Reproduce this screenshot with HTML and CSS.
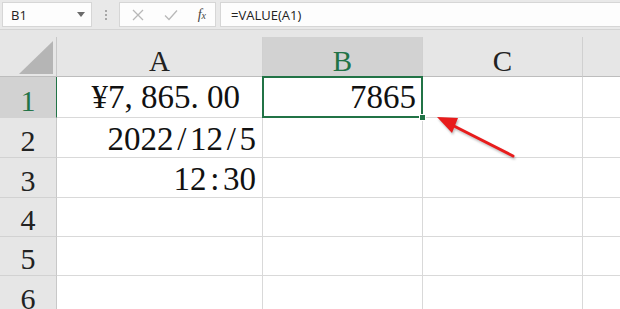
FILE: index.html
```html
<!DOCTYPE html>
<html lang="zh-CN">
<head>
    <meta charset="UTF-8">
    <title>VALUE</title>
    <link rel="stylesheet" href="styles.css">
</head>
<body>
    <div class="toolbar">
        <div class="namebox">
            <span>B1</span>
            <svg class="caret" width="8" height="5" viewBox="0 0 8 5"><path d="M0 0h8L4 5z" fill="#6b6b6b"/></svg>
        </div>
        <div class="grip"><i></i><i></i><i></i></div>
        <div class="fbuttons">
            <svg width="12" height="12" viewBox="0 0 12 12"><path d="M1 1l10 10M11 1L1 11" stroke="#b8b8b8" stroke-width="1.3"/></svg>
            <svg width="14" height="12" viewBox="0 0 14 12"><path d="M1 6.5l4 4L13 1.5" stroke="#b8b8b8" stroke-width="1.3" fill="none"/></svg>
            <span class="fx">f<small>x</small></span>
        </div>
        <div class="formula">=VALUE(A1)</div>
    </div>

    <div class="sheet">
        <div class="corner"><b></b></div>
        <div class="colhead">A</div>
        <div class="colhead sel">B</div>
        <div class="colhead">C</div>
        <div class="colhead last"></div>

        <div class="rowhead sel">1</div>
        <div class="cell money">¥7<span class="pl">,</span>865<span class="pl">.</span>00</div>
        <div class="cell active">7865</div>
        <div class="cell"></div>
        <div class="cell last"></div>

        <div class="rowhead">2</div>
        <div class="cell">2022<span class="pc">/</span>12<span class="pc">/</span>5</div>
        <div class="cell"></div>
        <div class="cell"></div>
        <div class="cell last"></div>

        <div class="rowhead">3</div>
        <div class="cell">12<span class="pc">:</span>30</div>
        <div class="cell"></div>
        <div class="cell"></div>
        <div class="cell last"></div>

        <div class="rowhead">4</div>
        <div class="cell"></div>
        <div class="cell"></div>
        <div class="cell"></div>
        <div class="cell last"></div>

        <div class="rowhead">5</div>
        <div class="cell"></div>
        <div class="cell"></div>
        <div class="cell"></div>
        <div class="cell last"></div>

        <div class="rowhead">6</div>
        <div class="cell"></div>
        <div class="cell"></div>
        <div class="cell"></div>
        <div class="cell last"></div>
    </div>

    <svg class="arrow" width="620" height="309" viewBox="0 0 620 309">
        <line x1="513" y1="156" x2="450" y2="124" stroke="#e81c1c" stroke-width="3" stroke-linecap="round"/>
        <polygon points="437,117 458,118 452,133" fill="#e81c1c"/>
    </svg>
</body>
</html>
```

FILE: styles.css
```css
body {
    margin: 0;
    width: 620px;
    height: 309px;
    overflow: hidden;
    background: #e6e6e6;
    position: relative;
    font-family: "Open Sans", "Noto Sans", sans-serif;
}
.toolbar {
    display: flex;
    align-items: center;
    height: 30px;
    padding: 0 0 0 2px;
    background: #e9e9e9;
    border-bottom: 1px solid #d4d4d4;
    box-sizing: border-box;
}
.namebox {
    width: 90px;
    height: 25px;
    background: #fdfdfd;
    border: 1px solid #d6d6d6;
    box-sizing: border-box;
    display: flex;
    align-items: center;
    justify-content: space-between;
    padding: 0 6px 0 8px;
    font-size: 13px;
    color: #222;
}
.grip {
    width: 27px;
    display: flex;
    flex-direction: column;
    align-items: center;
    gap: 2px;
}
.grip i {
    width: 2px;
    height: 2px;
    background: #a8a8a8;
}
.fbuttons {
    width: 97px;
    height: 25px;
    background: #fdfdfd;
    border: 1px solid #d6d6d6;
    box-sizing: border-box;
    display: flex;
    align-items: center;
    justify-content: space-between;
    padding: 0 9px 0 12px;
}
.fx {
    font-family: "Liberation Serif", serif;
    font-style: italic;
    font-size: 14px;
    color: #444;
}
.fx small {
    font-size: 10px;
}
.formula {
    flex: 1;
    height: 25px;
    margin-left: 4px;
    background: #fdfdfd;
    border: 1px solid #d6d6d6;
    border-right: none;
    box-sizing: border-box;
    padding: 0 10px;
    display: flex;
    align-items: center;
    font-size: 13px;
    color: #222;
}
.sheet {
    margin-top: 7px;
    display: grid;
    grid-template-columns: 57px 206px 160px 160px 1fr;
    grid-template-rows: 40px 41px 40px 40px 39px 39px 40px;
    background: #fff;
}
.corner {
    background: #e6e6e6;
    border-right: 1px solid #c8c8c8;
    border-bottom: 1px solid #bdbdbd;
    position: relative;
}
.corner b {
    position: absolute;
    right: 3px;
    bottom: 2px;
    width: 34px;
    height: 33px;
    background: #b5b5b5;
    clip-path: polygon(100% 0, 100% 100%, 0 100%);
}
.colhead {
    background: #e6e6e6;
    border-right: 1px solid #d0d0d0;
    border-bottom: 1px solid #bdbdbd;
    display: flex;
    align-items: flex-end;
    justify-content: center;
    font-family: "Liberation Serif", serif;
    font-size: 29px;
    line-height: 29px;
    color: #222;
}
.colhead.sel {
    background: #d2d2d2;
    color: #217346;
    border-bottom-color: #217346;
}
.colhead.last, .cell.last {
    border-right: none;
}
.rowhead {
    background: #e6e6e6;
    border-right: 1px solid #c8c8c8;
    border-bottom: 1px solid #d2d2d2;
    display: flex;
    align-items: flex-end;
    justify-content: center;
    padding-bottom: 1px;
    font-family: "Liberation Serif", serif;
    font-size: 30px;
    line-height: 30px;
    color: #222;
}
.rowhead.sel {
    background: #d2d2d2;
    color: #217346;
    border-right: 1px solid #217346;
}
.cell {
    border-right: 1px solid #d9d9d9;
    border-bottom: 1px solid #d9d9d9;
    display: flex;
    align-items: flex-end;
    justify-content: flex-end;
    padding: 0 6px 1px 0;
    font-family: "Liberation Serif", serif;
    font-size: 33px;
    line-height: 33px;
    color: #111;
    white-space: nowrap;
}
.cell.money {
    padding-right: 22px;
    padding-bottom: 3px;
}
.cell.active {
    position: relative;
    padding-bottom: 3px;
}
.cell.active::before {
    content: "";
    position: absolute;
    left: -1px;
    top: -1px;
    right: -1px;
    bottom: -1px;
    border: 2px solid #217346;
}
.cell.active::after {
    content: "";
    position: absolute;
    right: -4px;
    bottom: -4px;
    width: 5px;
    height: 5px;
    background: #217346;
    border: 1px solid #fff;
}
.pl, .pc {
    display: inline-block;
    width: 0.5em;
}
.pc {
    text-align: center;
}
.arrow {
    position: absolute;
    left: 0;
    top: 0;
    filter: drop-shadow(1px 2px 1px rgba(0, 0, 0, 0.25));
}
```
